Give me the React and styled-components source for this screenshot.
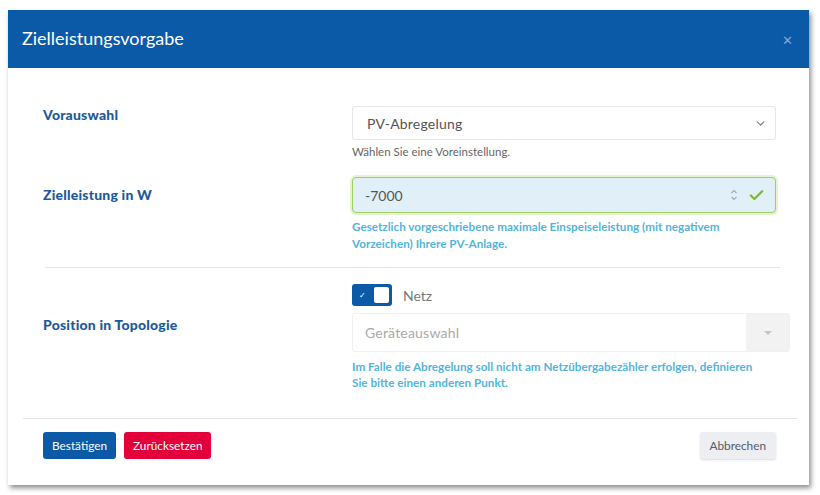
import React from "react";
import styled, { createGlobalStyle } from "styled-components";
import { ChevronDown, Check } from "lucide-react";

const GlobalStyle = createGlobalStyle`
  html, body {
    margin: 0;
    padding: 0;
    background: #ffffff;
  }
  body {
    font-family: Lato, "Open Sans", "Liberation Sans", sans-serif;
  }
`;

const Page = styled.div`
  width: 820px;
  height: 495px;
  padding: 10px 11px 0 8px;
  box-sizing: border-box;
`;

const Dialog = styled.div`
  background: #ffffff;
  box-shadow: 2px 3px 5px rgba(0, 0, 0, 0.45);
  height: 475px;
  display: flex;
  flex-direction: column;
`;

const Header = styled.div`
  height: 58px;
  background: #0b5aa8;
  display: flex;
  align-items: center;
  justify-content: space-between;
  padding: 0 16px 0 14px;
`;

const Title = styled.h1`
  margin: 0;
  font-size: 18px;
  font-weight: 400;
  color: #ffffff;
  margin-top: -3px;
`;

const Close = styled.span`
  color: #87a6cf;
  font-size: 13px;
  line-height: 1;
  margin-top: 2px;
`;

const Body = styled.div`
  padding: 38px 33px 0 35px;
`;

const Row = styled.div`
  display: grid;
  grid-template-columns: 309px 1fr;
  margin-top: ${(p) => p.$gap || 0}px;
`;

const Label = styled.div`
  font-weight: 900;
  font-size: 14px;
  letter-spacing: 0.2px;
  line-height: 18px;
  color: #1d5a9c;
  padding-top: ${(p) => p.$top || 0}px;
`;

const Field = styled.div`
  display: flex;
  flex-direction: column;
`;

const SelectBox = styled.div`
  height: 34px;
  box-sizing: border-box;
  border: 1px solid #e6e6e6;
  border-radius: 3px;
  display: flex;
  align-items: center;
  justify-content: space-between;
  padding: 0 8px 0 14px;
  font-size: 14px;
  color: #555;
  letter-spacing: 0.2px;
`;

const Hint = styled.div`
  margin-top: 5px;
  font-size: 11.5px;
  line-height: 14px;
  color: #666;
`;

const NumberInput = styled.div`
  height: 36px;
  box-sizing: border-box;
  border: 1.5px solid #9fcf5f;
  box-shadow: 0 0 0 2px rgba(180, 220, 120, 0.35);
  border-radius: 4px;
  background: #e1f0f8;
  display: flex;
  align-items: center;
  padding: 0 10px 0 12px;
  font-size: 14px;
  color: #555;
`;

const Value = styled.span`
  flex: 1;
`;

const Spinner = styled.svg`
  margin-right: 10px;
`;

const Help = styled.div`
  margin-top: ${(p) => p.$top || 5}px;
  font-size: 11.7px;
  font-weight: 700;
  line-height: ${(p) => p.$lh || 17}px;
  color: #52b5dc;
  padding-right: 12px;
`;

const Divider = styled.div`
  height: 1px;
  background: #e4e4e4;
  margin: 15px -4px 0 2px;
`;

const SwitchLine = styled.div`
  display: flex;
  align-items: center;
  gap: 11px;
  font-size: 14px;
  color: #777;
`;

const Switch = styled.div`
  width: 40px;
  height: 22px;
  box-sizing: border-box;
  border-radius: 3px;
  background: #0b5aa8;
  display: flex;
  align-items: center;
  justify-content: space-between;
  padding: 0 3px 0 7px;
  color: #fff;
  font-size: 8px;
`;

const Knob = styled.span`
  width: 15px;
  height: 16px;
  border-radius: 2px;
  background: #ffffff;
`;

const DeviceSelect = styled.div`
  margin-top: 7px;
  margin-right: -14px;
  height: 39px;
  box-sizing: border-box;
  border: 1px solid #f0f0f0;
  border-radius: 3px;
  display: flex;
  font-size: 14px;
  color: #aaa;
`;

const DeviceText = styled.div`
  flex: 1;
  display: flex;
  align-items: center;
  padding-left: 12px;
  letter-spacing: 0.2px;
`;

const Caret = styled.div`
  width: 43px;
  background: #f2f2f2;
  display: flex;
  align-items: center;
  justify-content: center;
  &::after {
    content: "";
    border-left: 4px solid transparent;
    border-right: 4px solid transparent;
    border-top: 4px solid #c4c4c4;
  }
`;

const Footer = styled.div`
  margin: 28px 12px 0 15px;
  border-top: 1px solid #e4e4e4;
  padding: 13px 21px 0 20px;
  display: flex;
  align-items: center;
  gap: 8px;
`;

const Button = styled.button`
  height: 27px;
  border: none;
  border-radius: 3px;
  padding: 0 ${(p) => (p.$variant === "ghost" ? 10 : 9)}px;
  font-family: inherit;
  font-size: 11.8px;
  color: ${(p) => (p.$variant === "ghost" ? "#555a64" : "#ffffff")};
  background: ${(p) =>
    p.$variant === "primary"
      ? "#0b5aa8"
      : p.$variant === "danger"
      ? "#e3003a"
      : "#eceef1"};
  box-shadow: ${(p) =>
    p.$variant === "ghost" ? "0 1px 2px rgba(0,0,0,0.15)" : "none"};
  margin-left: ${(p) => (p.$push ? "auto" : "0")};
`;

export default function App() {
  return (
    <>
      <GlobalStyle />
      <Page>
        <Dialog>
          <Header>
            <Title>Zielleistungsvorgabe</Title>
            <Close>✕</Close>
          </Header>
          <Body>
            <Row>
              <Label>Vorauswahl</Label>
              <Field>
                <SelectBox>
                  PV-Abregelung
                  <ChevronDown size={13} color="#777" strokeWidth={2} />
                </SelectBox>
                <Hint>Wählen Sie eine Voreinstellung.</Hint>
              </Field>
            </Row>
            <Row $gap={18}>
              <Label $top={9}>Zielleistung in W</Label>
              <Field>
                <NumberInput>
                  <Value>-7000</Value>
                  <Spinner width="8" height="14" viewBox="0 0 8 14">
                    <path
                      d="M1.5 5 L4 2.5 L6.5 5 M1.5 9 L4 11.5 L6.5 9"
                      fill="none"
                      stroke="#aaa"
                      strokeWidth="1.2"
                    />
                  </Spinner>
                  <Check size={17} color="#7cb82f" strokeWidth={3.2} />
                </NumberInput>
                <Help>
                  Gesetzlich vorgeschriebene maximale Einspeiseleistung (mit
                  negativem Vorzeichen) Ihrere PV-Anlage.
                </Help>
              </Field>
            </Row>
            <Divider />
            <Row $gap={16}>
              <Label $top={32}>Position in Topologie</Label>
              <Field>
                <SwitchLine>
                  <Switch>
                    ✓<Knob />
                  </Switch>
                  Netz
                </SwitchLine>
                <DeviceSelect>
                  <DeviceText>Geräteauswahl</DeviceText>
                  <Caret />
                </DeviceSelect>
                <Help $top={6} $lh={16}>
                  Im Falle die Abregelung soll nicht am Netzübergabezähler
                  erfolgen, definieren Sie bitte einen anderen Punkt.
                </Help>
              </Field>
            </Row>
          </Body>
          <Footer>
            <Button $variant="primary">Bestätigen</Button>
            <Button $variant="danger">Zurücksetzen</Button>
            <Button $variant="ghost" $push>
              Abbrechen
            </Button>
          </Footer>
        </Dialog>
      </Page>
    </>
  );
}
